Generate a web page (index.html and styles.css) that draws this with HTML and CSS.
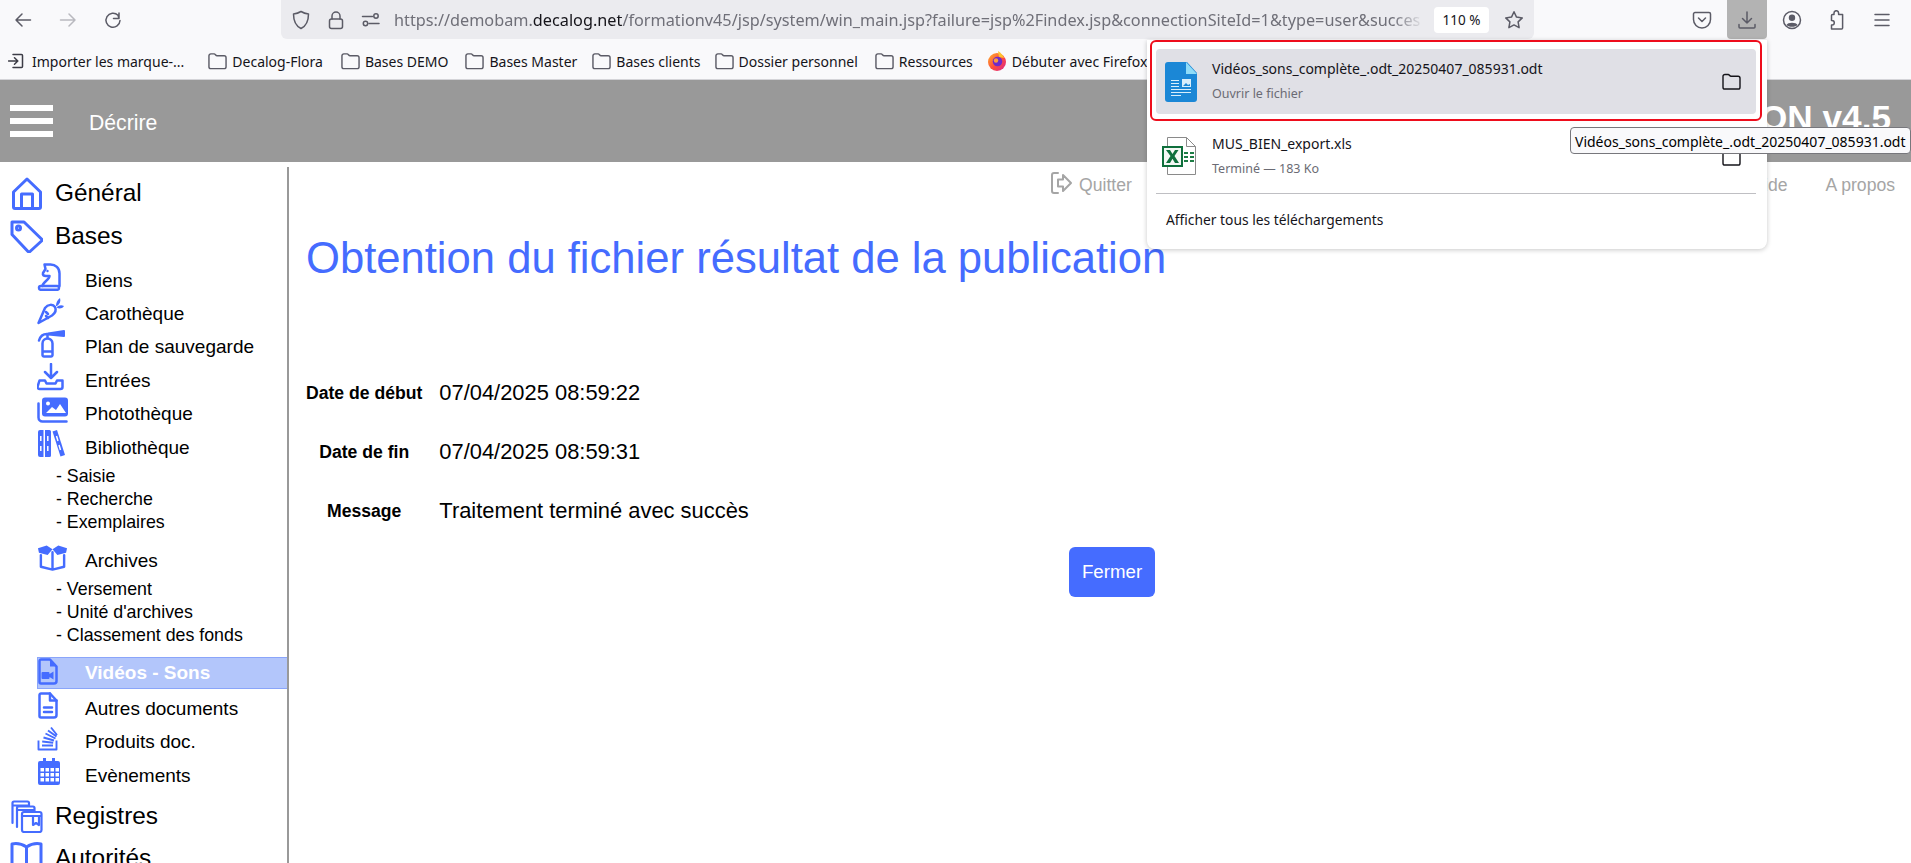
FILE: index.html
```html
<!DOCTYPE html>
<html lang="fr">
<head>
<meta charset="utf-8">
<title>Décrire</title>
<link rel="stylesheet" href="styles.css">
</head>
<body>
<div class="toolbar">
  <div class="nav-btn"><svg class="ci" viewBox="0 0 20 20"><path d="M17.500 10H3M9 4l-6 6 6 6"/></svg></div>
  <div class="nav-btn off"><svg class="ci" viewBox="0 0 20 20"><path d="M2.500 10H17M11 4l6 6-6 6"/></svg></div>
  <div class="nav-btn"><svg class="ci" viewBox="0 0 20 20"><path d="M16 3v5.500h-5.500M17 10.500a7 7 0 1 1-2-5.200L16 8.500"/></svg></div>
  <div class="urlbar">
    <div class="url-icon"><svg class="ci" viewBox="0 0 20 20"><path d="M10 1.500c2.500 1.600 5 2.200 7.500 2.400 0 7-1.500 11.500-7.500 14.600C4 15.400 2.500 10.900 2.500 3.900 5 3.700 7.500 3.100 10 1.500z"/></svg></div>
    <div class="url-icon"><svg class="ci" viewBox="0 0 20 20"><rect x="3.500" y="9" width="13" height="9.500" rx="2"/><path d="M6 9V6a4 4 0 0 1 8 0v3"/></svg></div>
    <div class="url-icon"><svg class="ci" viewBox="0 0 20 20"><path d="M1.500 6.500h10M8 13.500h10"/><circle cx="15" cy="6" r="2.200"/><circle cx="4.500" cy="13.500" r="2.200"/></svg></div>
    <div class="url-text">https://demobam.<b>decalog.net</b>/formationv45/jsp/system/win_main.jsp?failure=jsp%2Findex.jsp&amp;connectionSiteId=1&amp;type=user&amp;succes</div>
    <div class="zoom-badge">110 %</div>
    <div class="star"><svg class="ci" viewBox="0 0 20 20"><path d="M10 1.800l2.500 5.300 5.800.8-4.200 4 1 5.800-5.100-2.800-5.100 2.800 1-5.800-4.200-4 5.800-.8z"/></svg></div>
  </div>
  <div class="tools">
    <div class="tool"><svg class="ci" viewBox="0 0 20 20"><path d="M3 2.500h14a1.500 1.500 0 0 1 1.500 1.500v5.500a8.500 8.500 0 0 1-17 0V4A1.500 1.500 0 0 1 3 2.500z"/><path d="M6.500 8l3.500 3.500L13.500 8"/></svg></div>
    <div class="tool active"><svg class="ci" viewBox="0 0 20 20"><path d="M10 2v11M5.500 8.500l4.500 4.500 4.500-4.500M2 14.500v2.500a1 1 0 0 0 1 1h14a1 1 0 0 0 1-1v-2.500"/></svg></div>
    <div class="tool"><svg class="ci" viewBox="0 0 20 20"><circle cx="10" cy="10" r="8.500"/><circle class="solid" cx="10" cy="7.800" r="3.200"/><path class="solid" d="M4.500 15c1-3 10-3 11 0-2 2.400-9 2.400-11 0z"/></svg></div>
    <div class="tool"><svg class="ci" viewBox="0 0 20 20"><path d="M8 3.500V3a2.300 2.300 0 0 1 4.600 0v1.500h4v13.500a1 1 0 0 1-1 1H5.500v-4H6a2.300 2.300 0 0 0 0-4.600h-.5V5.500a1 1 0 0 1 1-1H8z" transform="translate(-1 0)"/></svg></div>
    <div class="tool"><svg class="ci" viewBox="0 0 20 20"><path d="M3 4.500h14M3 10h14M3 15.500h14"/></svg></div>
  </div>
</div>

<div class="bookmarks">
  <div class="bm"><svg class="ci small" viewBox="0 0 16 16"><path d="M5 1.500h8.500a1 1 0 0 1 1 1v11a1 1 0 0 1-1 1H5M.5 8h9M6.500 4.800 9.800 8l-3.300 3.200"/></svg><span>Importer les marque-...</span></div>
  <div class="bm gap1"><svg class="folder" viewBox="0 0 20 18"><path d="M1 3.500A2 2 0 0 1 3 1.500h3.500c1.200 0 1.500 2 3 2H17a2 2 0 0 1 2 2V15a2 2 0 0 1-2 2H3a2 2 0 0 1-2-2z"/></svg><span>Decalog-Flora</span></div>
  <div class="bm shift1"><svg class="folder" viewBox="0 0 20 18"><path d="M1 3.500A2 2 0 0 1 3 1.500h3.500c1.200 0 1.500 2 3 2H17a2 2 0 0 1 2 2V15a2 2 0 0 1-2 2H3a2 2 0 0 1-2-2z"/></svg><span>Bases DEMO</span></div>
  <div class="bm"><svg class="folder" viewBox="0 0 20 18"><path d="M1 3.500A2 2 0 0 1 3 1.500h3.500c1.200 0 1.500 2 3 2H17a2 2 0 0 1 2 2V15a2 2 0 0 1-2 2H3a2 2 0 0 1-2-2z"/></svg><span>Bases Master</span></div>
  <div class="bm shift2"><svg class="folder" viewBox="0 0 20 18"><path d="M1 3.500A2 2 0 0 1 3 1.500h3.500c1.200 0 1.500 2 3 2H17a2 2 0 0 1 2 2V15a2 2 0 0 1-2 2H3a2 2 0 0 1-2-2z"/></svg><span>Bases clients</span></div>
  <div class="bm tight"><svg class="folder" viewBox="0 0 20 18"><path d="M1 3.500A2 2 0 0 1 3 1.500h3.500c1.200 0 1.500 2 3 2H17a2 2 0 0 1 2 2V15a2 2 0 0 1-2 2H3a2 2 0 0 1-2-2z"/></svg><span>Dossier personnel</span></div>
  <div class="bm"><svg class="folder" viewBox="0 0 20 18"><path d="M1 3.500A2 2 0 0 1 3 1.500h3.500c1.200 0 1.500 2 3 2H17a2 2 0 0 1 2 2V15a2 2 0 0 1-2 2H3a2 2 0 0 1-2-2z"/></svg><span>Ressources</span></div>
  <div class="bm tight"><svg class="firefox" viewBox="0 0 20 20"><defs><linearGradient id="ffa" x1="0" y1="0" x2="1" y2="1"><stop offset="0" stop-color="#ffb32c"/><stop offset=".55" stop-color="#ff4a3c"/><stop offset="1" stop-color="#d5249b"/></linearGradient></defs><circle cx="10" cy="11" r="9" fill="url(#ffa)"/><path d="M11 0c3 2 5 4 6 7l-5-1z" fill="#ffc22e"/><circle cx="10.500" cy="10.500" r="4.800" fill="#6e2bc9"/><circle cx="9" cy="9.500" r="2.200" fill="#ff9a3a"/></svg><span>Débuter avec Firefox</span></div>
</div>

<header class="app-header">
  <div class="burger"><span></span><span></span><span></span></div>
  <div class="section-name">Décrire</div>
  <div class="app-name">FORMATION v4.5</div>
</header>

<div class="app-body">
  <nav class="sidebar">
    <div class="l1 first"><svg class="i1" viewBox="0 0 30 33"><path d="M15 2 28.500 15v15a1.500 1.500 0 0 1-1.500 1.500H3A1.500 1.500 0 0 1 1.500 30V15z"/><path d="M9.500 31V17h11v14"/></svg>Général</div>
    <div class="l1 second"><svg class="i1" viewBox="0 0 33 33"><path d="M2 2h12l17.500 17a1.500 1.500 0 0 1 0 2L20 31.500a1.500 1.500 0 0 1-2 0L2 14.500z"/><circle cx="8.500" cy="8" r="2"/></svg>Bases</div>

    <div class="l2"><svg class="i2" viewBox="0 0 28 28"><rect x="2" y="23" width="20" height="3.800" rx="1.800"/><path d="M5.500 23c0-4 7-6 7-10H9c-2.500 0-3.500-1-3-3l2.500-4-1-4.500h6c5 0 9 3.500 9 9V23"/><circle class="fill" cx="10.500" cy="8" r="1.200"/></svg>Biens</div>
    <div class="l2"><svg class="i2" viewBox="0 0 28 28"><path d="M1.500 26 8 11c3-4 8-4 10-1 2 4-1 7-3 8.500z"/><path d="M9 15l2 2M11 21l-2-2"/><path class="fill" d="M19 9c0-3 1-6 4-8 1 3 0 6-3 8zM19.500 10.500c2-2.500 5-3 7.500-1.500-2 3-5 3-7.500 1.500z"/></svg>Carothèque</div>
    <div class="l2"><svg class="i2" viewBox="0 0 28 28"><path d="M2 10.500c1-3.500 4-6.500 8-6.500M10.500 8V4"/><path d="M5.500 13.500a5 5 0 0 1 10 0V25a1.500 1.500 0 0 1-1.500 1.500H7A1.500 1.500 0 0 1 5.500 25zM5.500 21.500h10"/><path class="fill" d="M11 2.500 27 0a1 1 0 0 1 1 1v5a1 1 0 0 1-1 1L11 5.500z"/></svg>Plan de sauvegarde</div>
    <div class="l2"><svg class="i2" viewBox="0 0 28 28"><path d="M14 1v13M8 9l6 6 6-6M2.500 17.500H8l1.500 3h9l1.500-3h5.500V24a2 2 0 0 1-2 2h-21a2 2 0 0 1-2-2z"/></svg>Entrées</div>
    <div class="l2"><svg class="i2 wide" viewBox="0 0 31 27"><path class="fill" d="M8 0h20a3 3 0 0 1 3 3v13a3 3 0 0 1-3 3H8a3 3 0 0 1-3-3V3a3 3 0 0 1 3-3z"/><path class="cut" d="M9 15.500l6-6 4 3 4-6 6 9z"/><circle class="cut" cx="11" cy="6" r="2"/><path d="M1.500 6v14a4 4 0 0 0 4 4h24"/></svg>Photothèque</div>
    <div class="l2"><svg class="i2" viewBox="0 0 28 28"><path class="fill" d="M1 2a2 2 0 0 1 2-2h3.500v27H3a2 2 0 0 1-2-2zM8 0h4.500a1.500 1.500 0 0 1 1.500 1.500v24a1.500 1.500 0 0 1-1.500 1.500H8z"/><path class="fill" d="M15.500 1.500 20 0l8 25-4.500 1.500z"/><path class="cutline" d="M3.800 6v5M3.800 16v5M10.800 6v5M10.800 16v5M19.500 6l1.500 5M22 15l1.500 5"/></svg>Bibliothèque</div>
    <div class="sub first-sub">- Saisie</div>
    <div class="sub">- Recherche</div>
    <div class="sub">- Exemplaires</div>

    <div class="l2 gap"><svg class="i2 wide" viewBox="0 0 32 26"><path class="fill" d="M1 3 10 0l6 4-5 6-9-2.500zM31 3 22 0l-6 4 5 6 9-2.500z"/><path d="M4 10v12l12 3 12-3V10M16 7v18"/></svg>Archives</div>
    <div class="sub">- Versement</div>
    <div class="sub">- Unité d'archives</div>
    <div class="sub">- Classement des fonds</div>

    <div class="l2 gap selected"><svg class="i2 file" viewBox="0 0 20 27"><path d="M3 1.500h9l6.500 7V23a2.500 2.500 0 0 1-2.500 2.500H3A1.500 1.500 0 0 1 1.500 24V3A1.500 1.500 0 0 1 3 1.500z"/><path class="fill" d="M4.500 14h6a1 1 0 0 1 1 1v1l4-2.500v8l-4-2.500v1a1 1 0 0 1-1 1h-6a1 1 0 0 1-1-1v-5a1 1 0 0 1 1-1z"/><path class="fill" d="M12 1.500l6.500 7H12z"/></svg>Vidéos - Sons</div>
    <div class="l2"><svg class="i2 file" viewBox="0 0 20 27"><path d="M3 1.500h9l6.500 7V23a2.500 2.500 0 0 1-2.500 2.500H3A1.500 1.500 0 0 1 1.500 24V3A1.500 1.500 0 0 1 3 1.500z"/><path d="M6 15.500h8M6 20h8M12 1.500v7h6.500"/></svg>Autres documents</div>
    <div class="l2"><svg class="i2 thin2" viewBox="0 0 28 28"><path d="M1.500 15.500v9h18v-9M5 20.500h11M5.200 16.500l11 1.200M6.500 12.500l10.500 3M8.500 8.500l10 5M11 5.500l8.500 6M14 2.500l6 7.500"/></svg>Produits doc.</div>
    <div class="l2"><svg class="i2" viewBox="0 0 28 28"><path class="fill" d="M3 3h3V0h3v3h6V0h3v3h3a2 2 0 0 1 2 2v20a2 2 0 0 1-2 2H3a2 2 0 0 1-2-2V5a2 2 0 0 1 2-2z"/><path class="cut" d="M3.500 10h3.500v3.500H3.500zM8.500 10H12v3.500H8.500zM13.500 10H17v3.500h-3.500zM18.500 10H22v3.500h-3.500zM3.500 15h3.500v3.500H3.500zM8.500 15H12v3.500H8.500zM13.500 15H17v3.500h-3.500zM18.500 15H22v3.500h-3.500zM3.500 20h3.500v3.500H3.500zM8.500 20H12v3.500H8.500zM13.500 20H17v3.500h-3.500zM18.500 20H22v3.500h-3.500z"/></svg>Evènements</div>

    <div class="l1 third"><svg class="i1 thin" viewBox="0 0 33 33"><path d="M2.500 23V3A1.500 1.500 0 0 1 4 1.500h13.500A1.500 1.500 0 0 1 19 3v3M2.500 5.500H19M7 27V8a1.500 1.500 0 0 1 1.500-1.500H23A1.500 1.500 0 0 1 24.500 8v4M7 10h17"/><rect x="12" y="12" width="19.500" height="20" rx="2"/><path d="M12 16h19M23 16v9l3-2 3 2v-9"/></svg>Registres</div>
    <div class="l1 fourth"><svg class="i1" viewBox="0 0 33 33"><path d="M2 2c5-1 10 0 14.500 3C21 2 26 1 31 2v26c-5-1-10 0-14.500 3C12 28 7 27 2 28zM16.500 5v26"/></svg>Autorités</div>
  </nav>

  <main class="content">
    <div class="topnav">
      <a class="quit"><svg class="quit-icon" viewBox="0 0 22 24"><path d="M7 2H3a2 2 0 0 0-2 2v16a2 2 0 0 0 2 2h4"/><path d="M12 4l8 8-8 8v-4.500H7v-7h5z"/></svg>Quitter</a>
      <a class="help">Aide</a>
      <a class="about">A propos</a>
    </div>
    <h1 class="title">Obtention du fichier résultat de la publication</h1>
    <div class="result">
      <div class="lab">Date de début</div><div class="val">07/04/2025 08:59:22</div>
      <div class="lab">Date de fin</div><div class="val">07/04/2025 08:59:31</div>
      <div class="lab">Message</div><div class="val">Traitement terminé avec succès</div>
    </div>
    <div class="actions"><button class="close-btn">Fermer</button></div>
  </main>
</div>

<div class="dl-panel">
  <div class="focus-ring">
    <div class="dl-item hover">
      <svg class="doc-icon" viewBox="0 0 32 40"><path d="M3 0h19l10 11v26a3 3 0 0 1-3 3H3a3 3 0 0 1-3-3V3a3 3 0 0 1 3-3z" fill="#1b87d6"/><path d="M21 0l11 12H21z" fill="#8fdcf8"/><path d="M6 18h8v1H6zM6 21h8v1H6zM6 24h8v1H6zM6 27h20v1H6zM6 30h20v1H6zM6 33h10v1H6z" fill="#d8eefb"/><rect x="17" y="17" width="9" height="8" fill="#d8eefb"/><path d="M18 24l3-3 2 2 2-1v2z" fill="#1b87d6"/></svg>
      <div class="dl-text"><div class="dl-name">Vidéos_sons_complète_.odt_20250407_085931.odt</div><div class="dl-status">Ouvrir le fichier</div></div>
      <svg class="dl-folder" viewBox="0 0 20 18"><path d="M1 3.500A2 2 0 0 1 3 1.500h3.500c1.200 0 1.500 2 3 2H17a2 2 0 0 1 2 2V15a2 2 0 0 1-2 2H3a2 2 0 0 1-2-2z"/></svg>
    </div>
  </div>
  <div class="dl-item second-item">
    <svg class="xls-icon" viewBox="0 0 34 38"><path d="M5.500.5h19l9 9v28h-28z" fill="#fff" stroke="#8a8a8a"/><path d="M24.500.5v9h9" fill="none" stroke="#8a8a8a"/><path d="M22 15h4v2h-4zM28 15h4v2h-4zM22 19h4v2h-4zM28 19h4v2h-4zM22 23h4v2h-4zM28 23h4v2h-4z" fill="#1d7c45"/><rect x="1" y="10" width="19" height="19" fill="#f4f8f4" stroke="#0f6f3c" stroke-width="2"/><path d="M4 13h4l2.500 4 2.500-4h3.500l-4 6 4.500 7h-4l-2.500-4.300L8 26H4l4.500-7z" fill="#0f6f3c"/></svg>
    <div class="dl-text"><div class="dl-name">MUS_BIEN_export.xls</div><div class="dl-status">Terminé — 183 Ko</div></div>
    <svg class="dl-folder" viewBox="0 0 20 18"><path d="M1 3.500A2 2 0 0 1 3 1.500h3.500c1.200 0 1.500 2 3 2H17a2 2 0 0 1 2 2V15a2 2 0 0 1-2 2H3a2 2 0 0 1-2-2z"/></svg>
  </div>
  <div class="dl-sep"></div>
  <div class="dl-all">Afficher tous les téléchargements</div>
</div>
<div class="tooltip">Vidéos_sons_complète_.odt_20250407_085931.odt</div>
</body>
</html>
```
FILE: styles.css
```css
* { box-sizing: border-box; }
html, body { margin: 0; height: 863px; overflow: hidden; background: #fff; }
body { font-family: "Liberation Sans", Arial, sans-serif; color: #000; position: relative; }

.ci { width: 20px; height: 20px; fill: none; stroke: #5b5b66; stroke-width: 1.500; stroke-linecap: round; stroke-linejoin: round; }
.ci .solid { fill: #5b5b66; stroke: none; }
.ci.small { width: 16px; height: 16px; stroke: #3c3c46; }

.toolbar { height: 40px; background: #f9f9fb; display: flex; align-items: flex-start; }
.nav-btn { width: 45px; height: 39px; display: flex; align-items: center; justify-content: center; flex: none; }
.nav-btn.off { opacity: .4; }
.urlbar { width: 1253px; height: 39px; margin-left: 146px; padding-left: 2.500px; background: #ebebef; border-radius: 0 0 6px 6px; display: flex; align-items: center; flex: none; }
.url-icon { width: 35px; display: flex; justify-content: center; flex: none; }
.url-text { width: 1030px; margin-left: 5.500px; flex: none; white-space: nowrap; overflow: hidden; font-family: "Noto Sans", sans-serif; font-size: 16.250px; color: #6f6f78; -webkit-mask-image: linear-gradient(to right, #000 97%, transparent); mask-image: linear-gradient(to right, #000 97%, transparent); }
.url-text b { font-weight: 400; color: #15141a; }
.zoom-badge { width: 55px; height: 26px; margin-left: 10px; flex: none; background: #fff; border-radius: 4px; font-family: "Noto Sans", sans-serif; font-size: 13.500px; color: #15141a; display: flex; align-items: center; justify-content: center; }
.star { width: 43px; margin-left: 3px; display: flex; justify-content: center; flex: none; }
.tools { margin-left: auto; padding-right: 6.500px; display: flex; align-items: flex-start; gap: 2.500px; }
.tool { width: 45px; height: 39px; display: flex; align-items: center; justify-content: center; }
.tool + .tool { margin-left: -2.500px; }
.tool.active { width: 40px; margin-left: 0; background: #b3b3b3; border-radius: 0 0 4px 4px; }
.tool.active + .tool { margin-left: 0; }

.bookmarks { height: 40px; padding: 3px 0 0 8px; background: #f9f9fb; border-bottom: 1px solid #d4d4d8; display: flex; align-items: center; gap: 17px; font-family: "Noto Sans", sans-serif; font-size: 14px; color: #15141a; }
.bm { display: flex; align-items: center; gap: 5px; white-space: nowrap; }
.bm.gap1 { margin-left: 7px; }
.bm.shift1 { margin-left: 1px; }
.bm.shift2 { margin-left: -2px; }
.bm.tight { margin-left: -3px; }
.bm .ci.small { margin-right: 3px; }
.folder { width: 19px; height: 18px; fill: none; stroke: #5b5b66; stroke-width: 1.500; flex: none; }
.firefox { width: 20px; height: 20px; flex: none; }

.app-header { height: 82px; background: #999; color: #fff; display: flex; align-items: center; padding-right: 20px; }
.burger { width: 43px; margin-left: 10px; display: flex; flex-direction: column; gap: 7px; margin-top: -1px; }
.burger span { display: block; height: 6px; background: #fff; }
.section-name { margin-left: 36px; margin-top: 4px; font-size: 21.200px; }
.app-name { margin-left: auto; font-size: 35.200px; font-weight: 700; margin-top: -7px; }

.app-body { display: flex; height: 701px; overflow: hidden; }
.sidebar { width: 289px; height: 696px; margin-top: 5px; flex: none; border-right: 2px solid #999; overflow: hidden; }
.l1 { display: flex; align-items: center; padding-left: 10px; font-size: 24.400px; height: 44px; }
.l1.first { margin-top: 4px; padding-left: 12px; }
.l1.first .i1 { margin-right: 13px; }
.l1.second { margin-top: -1px; margin-bottom: 6px; }
.l1.third { margin-top: 2px; height: 44px; }
.l1.fourth { margin-top: -2px; }
.i1 { width: 33px; height: 33px; margin-right: 12px; flex: none; fill: none; stroke: #456cff; stroke-width: 3; stroke-linejoin: round; stroke-linecap: round; }
.i1.thin { stroke-width: 2.200; }
.first .i1 { width: 30px; }
.l2 { display: flex; align-items: center; margin-left: 37px; height: 33.400px; font-size: 19px; }
.i2 { width: 28px; height: 28px; margin-right: 20px; margin-bottom: 7px; flex: none; fill: none; stroke: #456cff; stroke-width: 2.500; stroke-linejoin: round; stroke-linecap: round; }
.i2.wide { width: 31px; margin-right: 17px; }
.i2.file { width: 20px; height: 27px; margin-left: 1px; margin-right: 27px; }
.i2.thin2 { stroke-width: 1.900; stroke-linecap: butt; }
.i2 .fill { fill: #456cff; stroke: none; }
.i2 .cut { fill: #fff; stroke: none; }
.i2 .cutline { stroke: #fff; stroke-width: 1.500; stroke-linecap: butt; }
.l2.gap { margin-top: 10px; }
.sub { height: 23px; margin-left: 56px; font-size: 17.800px; line-height: 23px; white-space: nowrap; }
.first-sub { margin-top: 1px; }
.l2.selected { height: 32px; padding-top: 1px; margin-top: 10px; background: #b3c6fb; border: 1px solid #8aa5fa; border-right: 0; color: #fff; font-weight: 700; margin-left: 37px; margin-bottom: 3.500px; }
.l2.selected .i2 { margin-left: 0; margin-bottom: 3px; }

.content { flex: 1; min-width: 0; }
.topnav { display: flex; align-items: center; height: 46px; padding: 0 16px 0 762px; color: #a5a5a5; font-size: 17.600px; }
.quit { display: flex; align-items: center; gap: 6px; }
.quit-icon { width: 22px; height: 24px; fill: none; stroke: #a5a5a5; stroke-width: 2; stroke-linejoin: round; stroke-linecap: round; margin-top: -5px; }
.help { margin-left: auto; }
.about { margin-left: 38px; }
.title { margin: 24px 0 0 17px; font-size: 43.600px; line-height: 52px; font-weight: 400; color: #456cff; white-space: nowrap; }
.result { display: grid; grid-template-columns: auto auto; justify-content: start; column-gap: 17px; row-gap: 33px; margin: 96px 0 0 17px; align-items: center; }
.lab { font-size: 17.600px; font-weight: 700; text-align: center; line-height: 26px; margin-top: -1px; }
.val { font-size: 21.900px; line-height: 26px; }
.actions { display: flex; margin-top: 23px; padding-left: 780px; }
.close-btn { width: 86px; height: 50px; padding: 0; border: 0; border-radius: 6px; background: #456cff; color: #fff; font: 18.700px "Liberation Sans", Arial, sans-serif; }

.dl-panel { position: absolute; left: 1147px; top: 40px; width: 620px; height: 209px; background: #fff; border-radius: 0 0 8px 8px; box-shadow: 0 1px 5px rgba(0,0,0,.22); padding: 0 5px 0 3px; font-family: "Noto Sans", sans-serif; color: #15141a; }
.focus-ring { height: 81px; padding: 7px 4px 5px; border: 2px solid #ee0d1c; border-radius: 6px; }
.dl-item { display: flex; align-items: center; padding: 0 15px 0 9px; height: 65px; }
.dl-item.hover { background: #e0e0e6; border-radius: 4px; }
.second-item { height: 72px; margin: 0 6px; padding-left: 6px; }
.doc-icon { width: 32px; height: 40px; margin-right: 15px; flex: none; }
.xls-icon { width: 34px; height: 38px; margin-right: 16px; flex: none; margin-top: -2px; }
.dl-text { flex: 1; display: flex; flex-direction: column; gap: 7px; margin-top: -1px; }
.dl-name { font-size: 14px; line-height: 18px; white-space: nowrap; }
.dl-status { font-size: 12.500px; line-height: 18px; color: #6b6b74; }
.dl-folder { width: 19px; height: 17px; fill: none; stroke: #15141a; stroke-width: 1.500; flex: none; }
.dl-sep { height: 1px; margin: 0 6px; background: #bfbfc3; }
.dl-all { margin-left: 16px; height: 51px; display: flex; align-items: center; font-size: 13.800px; }
.tooltip { position: absolute; left: 1570px; top: 127px; width: 341px; height: 27px; padding: 1px 4px 0; background: #f9f9fb; border: 1px solid #77777c; border-radius: 4px; font-family: "Noto Sans", sans-serif; font-size: 14px; line-height: 25px; color: #000; white-space: nowrap; overflow: hidden; }
```
